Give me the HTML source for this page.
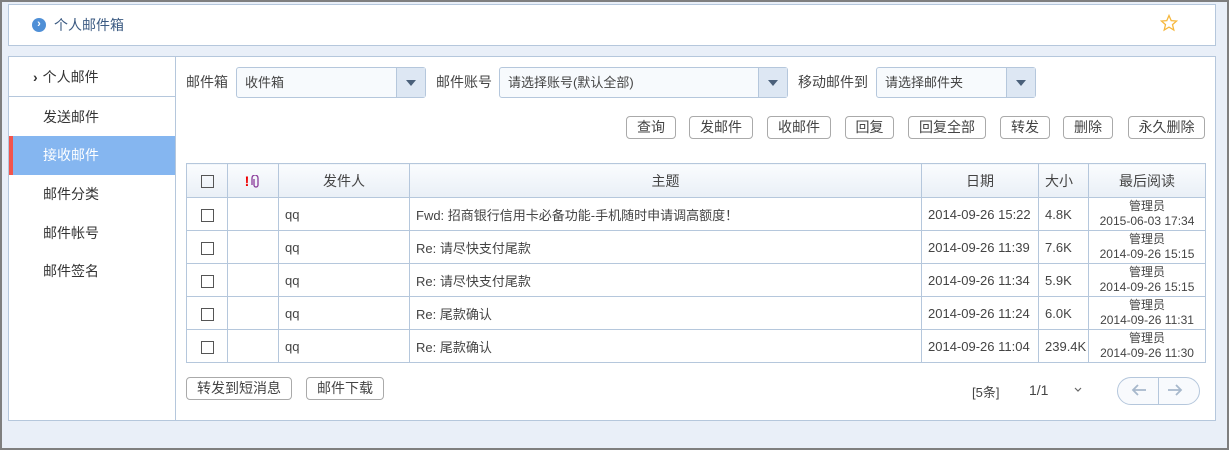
<!DOCTYPE html>
<html><head><meta charset="utf-8"><style>
*{box-sizing:border-box;margin:0;padding:0}
body{width:1229px;height:450px;overflow:hidden;font-family:"Liberation Sans","Noto Sans CJK SC",sans-serif;font-size:13px;color:#333;background:#7f7f7f;position:relative}
.bg{position:absolute;left:2px;top:2px;width:1225px;height:446px;background:#e9eff8}
.abs{position:absolute}
.hdr{left:8px;top:4px;width:1208px;height:42px;background:#fff;border:1px solid #b5c7dc}
.main{left:8px;top:56px;width:1208px;height:365px;background:#fff;border:1px solid #b5c7dc}
.side{left:9px;top:57px;width:167px;height:363px;border-right:1px solid #b5c7dc}
.si{position:absolute;left:0;width:166px;height:39px;line-height:39px;padding-left:34px;font-size:14px;color:#333}
.sel{position:absolute;height:31px;border:1px solid #b5c7dc;border-radius:3px;background:#f7fafd;font-size:13px;line-height:29px;padding-left:8px;color:#444}
.sel .dd{position:absolute;right:0;top:0;width:29px;height:29px;background:#dde7f3;border-left:1px solid #b5c7dc}
.sel .dd:after{content:"";position:absolute;left:9px;top:12px;border:5px solid transparent;border-top:6px solid #4a607a}
.lbl{position:absolute;font-size:14px;color:#444;top:72px}
.btn{position:absolute;top:116px;height:23px;border:1px solid #aaa;border-radius:4px;background:#fff;font-size:14px;line-height:21px;text-align:center;color:#444}
table{position:absolute;left:186px;top:163px;border-collapse:collapse;width:1020px}
td,th{border:1px solid #b5c7dc;font-weight:normal;font-size:13px;color:#444}
th{height:34px;background:linear-gradient(#fafcfe,#e9eff6);font-size:14px}
td{height:33px;padding-left:6px}
td.c{text-align:center;padding:0}
.cb{display:inline-block;width:13px;height:13px;border:1px solid #555;vertical-align:middle}
.two{font-size:12px;line-height:15px;text-align:center;padding:0}
</style></head><body>
<div class="bg"></div>
<div class="abs hdr"></div>
<div class="abs" style="left:32px;top:18px;width:14px;height:14px;border-radius:50%;background:#4f8fd6;color:#fff;font-size:11px;line-height:13px;text-align:center;font-weight:bold">›</div>
<div class="abs" style="left:54px;top:15px;font-size:14px;color:#3b5a82">个人邮件箱</div>
<svg class="abs" style="left:1160px;top:14px" width="18" height="18" viewBox="0 0 18 18"><polygon points="9,1.5 11.2,6.6 16.6,7 12.5,10.6 13.8,16 9,13.1 4.2,16 5.5,10.6 1.4,7 6.8,6.6" fill="none" stroke="#f6b73c" stroke-width="1.3"/></svg>
<div class="abs main"></div>
<div class="abs side">
 <div class="si" style="top:0;height:40px;line-height:40px;padding-left:24px;border-bottom:1px solid #b5c7dc"><b style="font-size:14px;margin-right:5px">›</b>个人邮件</div>
 <div class="si" style="top:41px">发送邮件</div>
 <div class="si" style="top:79px;background:#85b6f0;color:#fff;border-left:4px solid #f2544c;padding-left:30px">接收邮件</div>
 <div class="si" style="top:118px">邮件分类</div>
 <div class="si" style="top:157px">邮件帐号</div>
 <div class="si" style="top:195px">邮件签名</div>
</div>
<div class="lbl" style="left:186px">邮件箱</div>
<div class="sel" style="left:236px;top:67px;width:190px">收件箱<div class="dd"></div></div>
<div class="lbl" style="left:436px">邮件账号</div>
<div class="sel" style="left:499px;top:67px;width:289px">请选择账号(默认全部)<div class="dd"></div></div>
<div class="lbl" style="left:798px">移动邮件到</div>
<div class="sel" style="left:876px;top:67px;width:160px">请选择邮件夹<div class="dd"></div></div>
<div class="btn" style="left:626px;width:50px">查询</div>
<div class="btn" style="left:689px;width:64px">发邮件</div>
<div class="btn" style="left:767px;width:64px">收邮件</div>
<div class="btn" style="left:845px;width:49px">回复</div>
<div class="btn" style="left:908px;width:78px">回复全部</div>
<div class="btn" style="left:1000px;width:50px">转发</div>
<div class="btn" style="left:1063px;width:50px">删除</div>
<div class="btn" style="left:1128px;width:77px">永久删除</div>
<table>
<tr><th style="width:41px"><span class="cb"></span></th><th style="width:51px"><span style="color:#e00;font-weight:bold">!</span><svg width="10" height="13" viewBox="0 0 10 13" style="vertical-align:middle;margin-left:2px"><path d="M3 4v6a2 2 0 0 0 4 0V3a3 3 0 0 0-6 0v7" fill="none" stroke="#8a3a9a" stroke-width="1.3"/></svg></th><th style="width:131px">发件人</th><th style="width:512px">主题</th><th style="width:117px">日期</th><th style="width:50px;text-align:left;padding-left:6px">大小</th><th>最后阅读</th></tr>
<tr><td class="c"><span class="cb"></span></td><td></td><td>qq</td><td>Fwd: 招商银行信用卡必备功能-手机随时申请调高额度！</td><td>2014-09-26 15:22</td><td>4.8K</td><td class="two">管理员<br>2015-06-03 17:34</td></tr>
<tr><td class="c"><span class="cb"></span></td><td></td><td>qq</td><td>Re: 请尽快支付尾款</td><td>2014-09-26 11:39</td><td>7.6K</td><td class="two">管理员<br>2014-09-26 15:15</td></tr>
<tr><td class="c"><span class="cb"></span></td><td></td><td>qq</td><td>Re: 请尽快支付尾款</td><td>2014-09-26 11:34</td><td>5.9K</td><td class="two">管理员<br>2014-09-26 15:15</td></tr>
<tr><td class="c"><span class="cb"></span></td><td></td><td>qq</td><td>Re: 尾款确认</td><td>2014-09-26 11:24</td><td>6.0K</td><td class="two">管理员<br>2014-09-26 11:31</td></tr>
<tr><td class="c"><span class="cb"></span></td><td></td><td>qq</td><td>Re: 尾款确认</td><td>2014-09-26 11:04</td><td>239.4K</td><td class="two">管理员<br>2014-09-26 11:30</td></tr>
</table>
<div class="btn" style="left:186px;top:377px;width:106px">转发到短消息</div>
<div class="btn" style="left:306px;top:377px;width:78px">邮件下载</div>
<div class="abs" style="left:972px;top:382px;font-size:13px;color:#444">[5条]</div>
<div class="abs" style="left:1029px;top:382px;font-size:14px;color:#444">1/1</div>
<svg class="abs" style="left:1074px;top:387px" width="8" height="6" viewBox="0 0 8 6"><path d="M1 1l3 3 3-3" fill="none" stroke="#666" stroke-width="1.2"/></svg>
<div class="abs" style="left:1117px;top:377px;width:83px;height:28px;border:1px solid #b5c7dc;border-radius:14px;background:#f8fafd"></div>
<div class="abs" style="left:1158px;top:378px;width:1px;height:26px;background:#b5c7dc"></div>
<svg class="abs" style="left:1131px;top:383px" width="16" height="14" viewBox="0 0 16 14"><path d="M15 7H2M7 2L2 7l5 5" fill="none" stroke="#a7b8cc" stroke-width="1.8"/></svg>
<svg class="abs" style="left:1167px;top:383px" width="16" height="14" viewBox="0 0 16 14"><path d="M1 7h13M9 2l5 5-5 5" fill="none" stroke="#a7b8cc" stroke-width="1.8"/></svg>
</body></html>
